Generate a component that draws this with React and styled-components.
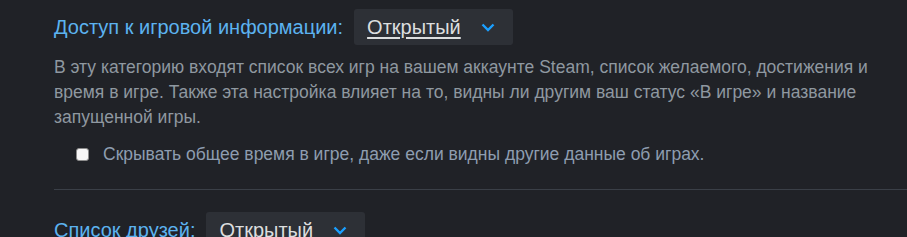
import styled, { createGlobalStyle } from 'styled-components'

const Global = createGlobalStyle`
  html, body {
    margin: 0;
    background: #202227;
  }
  body {
    font-family: "Liberation Sans", Arial, sans-serif;
  }
`

const Page = styled.div`
  width: 907px;
  height: 237px;
  overflow: hidden;
  padding: 9px 0 0 54px;
  box-sizing: border-box;
`

const Section = styled.div`
  display: flex;
  flex-direction: column;
`

const Row = styled.div`
  display: flex;
  align-items: center;
  gap: 11px;
`

const Label = styled.div`
  color: #5cb3f0;
  font-size: 20px;
`

const Dropdown = styled.div`
  display: flex;
  align-items: center;
  gap: 20px;
  height: 36px;
  padding: 0 18px 0 13px;
  background: #2d3036;
  border-radius: 3px;
  color: #dcdedf;
  font-size: 20px;
  cursor: pointer;

  span {
    text-decoration: ${p => (p.$focused ? 'underline' : 'none')};
    text-decoration-thickness: 1.5px;
    text-underline-offset: 3px;
  }
`

const Desc = styled.p`
  margin: 9.5px 0 0;
  max-width: 830px;
  color: #8f98a0;
  font-size: 17.5px;
  line-height: 25px;
`

const CheckRow = styled.label`
  display: flex;
  align-items: center;
  gap: 14px;
  height: 20px;
  margin: 14.5px 0 0 22px;
  color: #8e9db0;
  font-size: 17.5px;
  cursor: pointer;
`

const Box = styled.span`
  width: 13px;
  height: 13px;
  border-radius: 3px;
  background: #f7f7f7;
  border: 1px solid #8c8c8c;
  box-sizing: border-box;
`

const Divider = styled.div`
  height: 1px;
  background: #3a3f47;
  margin: 25px 0 22px;
`

const Chevron = () => (
  <svg width="14" height="9" viewBox="0 0 14 9" fill="none">
    <path d="M1.5 1.5 L7 7 L12.5 1.5" stroke="#1a9fff" strokeWidth="2.4" />
  </svg>
)

const Setting = ({ label, value, focused }) => (
  <Row>
    <Label>{label}</Label>
    <Dropdown $focused={focused}>
      <span>{value}</span>
      <Chevron />
    </Dropdown>
  </Row>
)

export default function App() {
  return (
    <>
      <Global />
      <Page>
        <Section>
          <Setting label="Доступ к игровой информации:" value="Открытый" focused />
          <Desc>
            В эту категорию входят список всех игр на вашем аккаунте Steam, список желаемого, достижения и
            время в игре. Также эта настройка влияет на то, видны ли другим ваш статус «В игре» и название
            запущенной игры.
          </Desc>
          <CheckRow>
            <Box />
            Скрывать общее время в игре, даже если видны другие данные об играх.
          </CheckRow>
          <Divider />
          <Setting label="Список друзей:" value="Открытый" />
        </Section>
      </Page>
    </>
  )
}
